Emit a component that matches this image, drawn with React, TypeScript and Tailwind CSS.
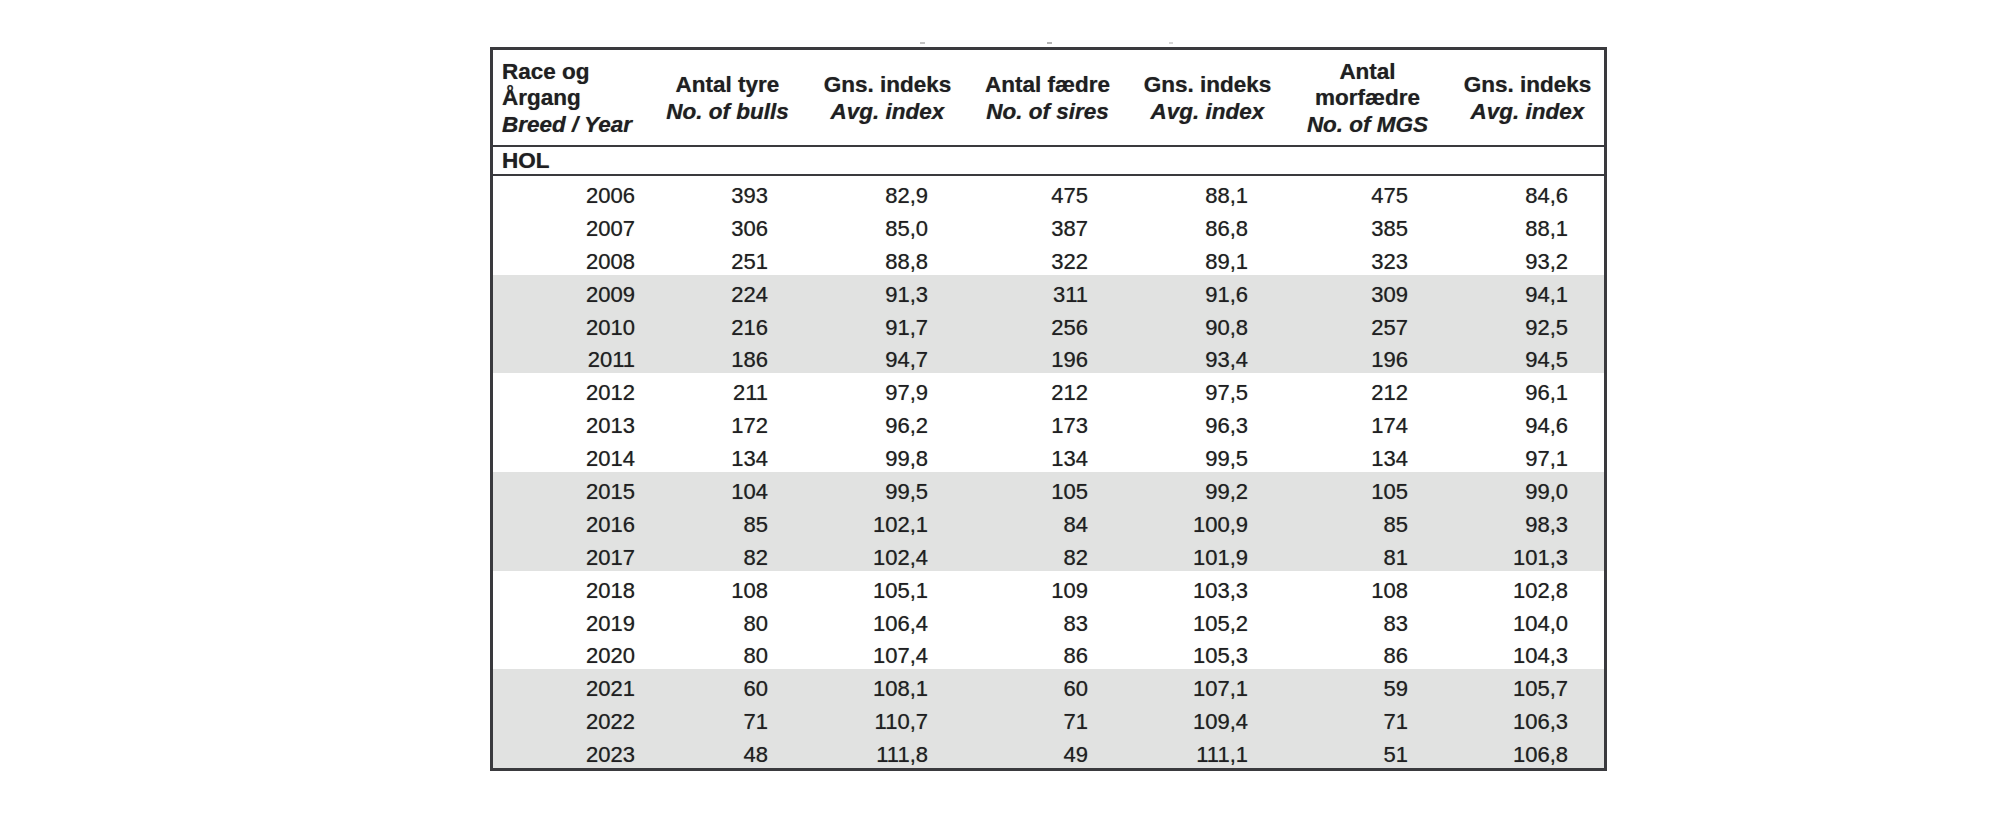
import React from "react";

const rows: [string, string, string, string, string, string, string][] = [
  ["2006", "393", "82,9", "475", "88,1", "475", "84,6"],
  ["2007", "306", "85,0", "387", "86,8", "385", "88,1"],
  ["2008", "251", "88,8", "322", "89,1", "323", "93,2"],
  ["2009", "224", "91,3", "311", "91,6", "309", "94,1"],
  ["2010", "216", "91,7", "256", "90,8", "257", "92,5"],
  ["2011", "186", "94,7", "196", "93,4", "196", "94,5"],
  ["2012", "211", "97,9", "212", "97,5", "212", "96,1"],
  ["2013", "172", "96,2", "173", "96,3", "174", "94,6"],
  ["2014", "134", "99,8", "134", "99,5", "134", "97,1"],
  ["2015", "104", "99,5", "105", "99,2", "105", "99,0"],
  ["2016", "85", "102,1", "84", "100,9", "85", "98,3"],
  ["2017", "82", "102,4", "82", "101,9", "81", "101,3"],
  ["2018", "108", "105,1", "109", "103,3", "108", "102,8"],
  ["2019", "80", "106,4", "83", "105,2", "83", "104,0"],
  ["2020", "80", "107,4", "86", "105,3", "86", "104,3"],
  ["2021", "60", "108,1", "60", "107,1", "59", "105,7"],
  ["2022", "71", "110,7", "71", "109,4", "71", "106,3"],
  ["2023", "48", "111,8", "49", "111,1", "51", "106,8"],
];

const grid = "grid grid-cols-[151px_160px_160px_160px_160px_160px_160px]";

function Head({ lines }: { lines: { t: string; i?: boolean }[] }) {
  return (
    <div className="flex flex-col items-center justify-center pl-[7px] pt-[2px] text-center">
      {lines.map((l, k) => (
        <span key={k} className={l.i ? "italic" : ""}>
          {l.t}
        </span>
      ))}
    </div>
  );
}

export default function App() {
  return (
    <div
      className="min-h-[818px] w-[2000px] bg-white pl-[490px] pt-[42px] text-[#1f1f22] [text-shadow:0_0_0.7px_rgba(20,20,25,0.55)]"
      style={{ fontFamily: '"Liberation Sans", Arial, sans-serif' }}
    >
      <div className="flex h-[3px] items-start">
        <span className="ml-[430px] h-[2px] w-[5px] bg-[#c4c4c4]" />
        <span className="ml-[122px] h-[2px] w-[5px] bg-[#b4b4b4]" />
        <span className="ml-[117px] h-[2px] w-[4px] bg-[#d6d6d6]" />
      </div>
      <div className="mt-[2px] w-[1117px] border-[3px] border-[#3a3a3e]">
        <div className={`${grid} h-[97px] border-b-[2px] border-[#3a3a3e] text-[22.5px] font-bold leading-[26.5px]`}>
          <div className="flex flex-col justify-center pl-[9px] pt-[2px]">
            <span>Race og</span>
            <span>Årgang</span>
            <span className="italic">Breed / Year</span>
          </div>
          <Head lines={[{ t: "Antal tyre" }, { t: "No. of bulls", i: true }]} />
          <Head lines={[{ t: "Gns. indeks" }, { t: "Avg. index", i: true }]} />
          <Head lines={[{ t: "Antal fædre" }, { t: "No. of sires", i: true }]} />
          <Head lines={[{ t: "Gns. indeks" }, { t: "Avg. index", i: true }]} />
          <Head lines={[{ t: "Antal" }, { t: "morfædre" }, { t: "No. of MGS", i: true }]} />
          <Head lines={[{ t: "Gns. indeks" }, { t: "Avg. index", i: true }]} />
        </div>
        <div className="flex h-[29px] items-center border-b-[2px] border-[#3a3a3e] pl-[9px] pt-[2px] text-[22.5px] font-bold leading-none">
          HOL
        </div>
        <div className="flex flex-col text-[22px] leading-[33px]">
          {rows.map((r, i) => {
            const shaded = Math.floor(i / 3) % 2 === 1;
            return (
              <div
                key={r[0]}
                className={`${grid} h-[32.9px] pt-[3px] ${shaded ? "bg-[#e1e2e1]" : "bg-white"}`}
              >
                <div className="pr-[9px] text-right">{r[0]}</div>
                {r.slice(1).map((v, j) => (
                  <div key={j} className="pr-[36px] text-right">
                    {v}
                  </div>
                ))}
              </div>
            );
          })}
        </div>
      </div>
    </div>
  );
}
